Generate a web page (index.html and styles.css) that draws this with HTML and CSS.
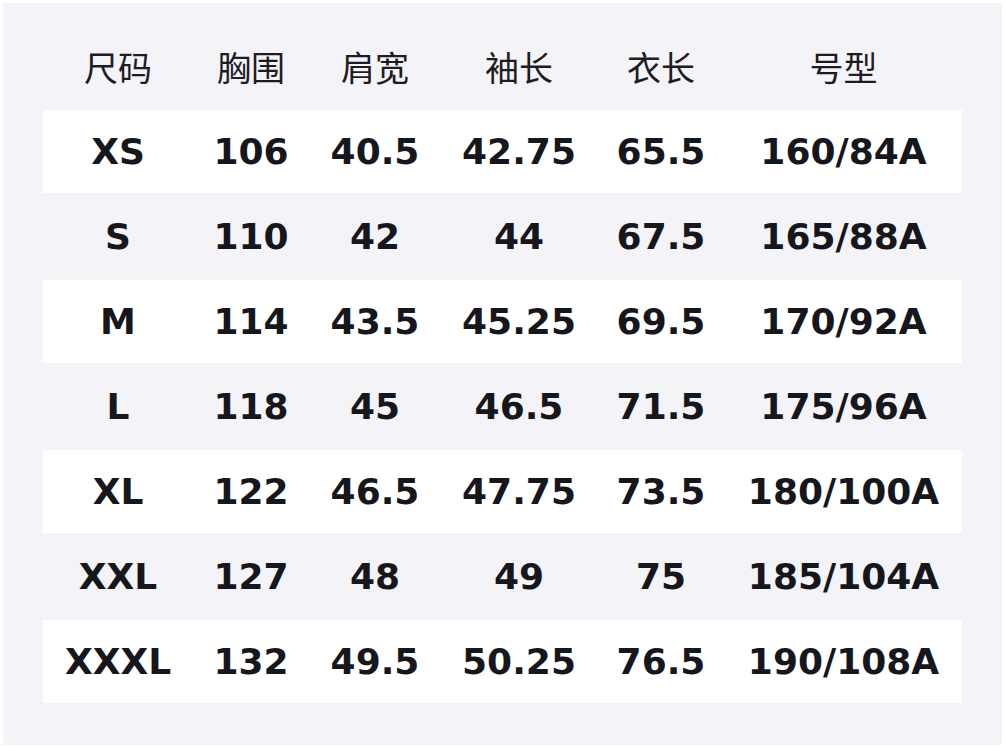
FILE: index.html
```html
<!DOCTYPE html>
<html lang="zh">
<head>
<meta charset="utf-8">
<title>尺码表</title>
<link rel="stylesheet" href="styles.css">
</head>
<body>
<div class="panel">
  <table class="size-table">
    <colgroup>
      <col class="c1"><col class="c2"><col class="c3"><col class="c4"><col class="c5"><col class="c6">
    </colgroup>
    <thead>
      <tr><th>尺码</th><th>胸围</th><th>肩宽</th><th>袖长</th><th>衣长</th><th>号型</th></tr>
    </thead>
    <tbody>
      <tr class="odd"><td>XS</td><td>106</td><td>40.5</td><td>42.75</td><td>65.5</td><td>160/84A</td></tr>
      <tr><td>S</td><td>110</td><td>42</td><td>44</td><td>67.5</td><td>165/88A</td></tr>
      <tr class="odd"><td>M</td><td>114</td><td>43.5</td><td>45.25</td><td>69.5</td><td>170/92A</td></tr>
      <tr><td>L</td><td>118</td><td>45</td><td>46.5</td><td>71.5</td><td>175/96A</td></tr>
      <tr class="odd"><td>XL</td><td>122</td><td>46.5</td><td>47.75</td><td>73.5</td><td>180/100A</td></tr>
      <tr><td>XXL</td><td>127</td><td>48</td><td>49</td><td>75</td><td>185/104A</td></tr>
      <tr class="odd"><td>XXXL</td><td>132</td><td>49.5</td><td>50.25</td><td>76.5</td><td>190/108A</td></tr>
    </tbody>
  </table>
</div>
</body>
</html>
```
FILE: styles.css
```css
html, body {
  margin: 0;
  padding: 0;
  background: #ffffff;
}
body {
  padding: 3px;
}
.panel {
  width: 999px;
  height: 742px;
  box-sizing: border-box;
  background: #f4f3f8;
  padding: 22px 40px 40px 40px;
}
.size-table {
  table-layout: fixed;
  width: 919px;
  border-collapse: separate;
  border-spacing: 0;
}
.c1 { width: 150px; }
.c2 { width: 116px; }
.c3 { width: 132px; }
.c4 { width: 156px; }
.c5 { width: 128px; }
.c6 { width: 237px; }
.size-table tr {
  height: 85px;
}
.size-table th,
.size-table td {
  padding: 0;
  text-align: center;
  vertical-align: middle;
  white-space: nowrap;
  color: #16161d;
  border-bottom: 2px solid #f4f3f8;
}
.size-table th {
  font-family: "Noto Sans CJK SC", "Noto Sans", sans-serif;
  font-weight: 400;
  font-size: 34px;
  color: #1c1c22;
}
.size-table td {
  font-family: "DejaVu Sans", sans-serif;
  font-weight: 700;
  font-size: 36px;
}
.size-table tr.odd td {
  background: #ffffff;
}
```
